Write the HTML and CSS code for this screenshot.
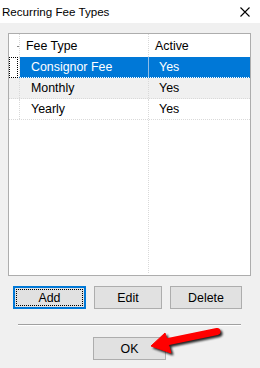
FILE: index.html
```
<!DOCTYPE html>
<html>
<head>
<meta charset="utf-8">
<link rel="stylesheet" href="styles.css">
</head>
<body>
<div class="window">
  <div class="titlebar">
    <span class="title">Recurring Fee Types</span>
    <svg class="close" width="10" height="10" viewBox="0 0 10 10"><path d="M0.5 0.5 L9.5 9.5 M9.5 0.5 L0.5 9.5" stroke="#000" stroke-width="1.1" fill="none"/></svg>
  </div>
  <div class="content">
    <div class="list">
      <div class="row header">
        <div class="rh"><span class="mark"></span></div>
        <div class="c1">Fee Type</div>
        <div class="c2">Active</div>
      </div>
      <div class="row data selected">
        <div class="rh"><span class="focus"></span></div>
        <div class="c1">Consignor Fee</div>
        <div class="c2">Yes</div>
      </div>
      <div class="row data alt">
        <div class="rh"></div>
        <div class="c1">Monthly</div>
        <div class="c2">Yes</div>
      </div>
      <div class="row data">
        <div class="rh"></div>
        <div class="c1">Yearly</div>
        <div class="c2">Yes</div>
      </div>
      <div class="filler"><div class="fill-left"></div></div>
    </div>
    <div class="buttons">
      <button class="btn default"><span class="focus-text">Add</span></button>
      <button class="btn edit">Edit</button>
      <button class="btn del">Delete</button>
    </div>
    <div class="separator"></div>
    <div class="ok-row">
      <button class="btn ok">OK</button>
    </div>
  </div>
  <svg class="arrow" width="260" height="368" viewBox="0 0 260 368">
    <defs>
      <filter id="sh" x="-20%" y="-40%" width="150%" height="200%">
        <feGaussianBlur stdDeviation="1.2"/>
      </filter>
    </defs>
    <g transform="translate(2,2)" filter="url(#sh)" fill="#000" stroke="#000" opacity="0.85">
      <line x1="166" y1="342" x2="217" y2="331.5" stroke-width="7" stroke-linecap="round"/>
      <polygon points="151,346 165,333 171,353" stroke-width="1" stroke-linejoin="round"/>
    </g>
    <g fill="#f00" stroke="#f00">
      <line x1="166" y1="342" x2="217" y2="331.5" stroke-width="7" stroke-linecap="round"/>
      <polygon points="151,346 165,333 171,353" stroke-width="1" stroke-linejoin="round"/>
    </g>
  </svg>
</div>
</body>
</html>
```
FILE: styles.css
```
* { box-sizing: border-box; }
html, body { margin: 0; padding: 0; }
body {
  background: #f0f0f0;
  font-family: "Liberation Sans", Arial, sans-serif;
  color: #000;
}
.window {
  position: relative;
  width: 260px;
  height: 368px;
  background: #f0f0f0;
  overflow: hidden;
}
.titlebar {
  height: 23px;
  background: #fff;
  display: flex;
  align-items: center;
  justify-content: space-between;
  padding: 0 10px 0 2px;
}
.title {
  font-size: 11.6px;
  margin-top: -1px;
}
.close { display: block; margin-top: 1px; }
.content {
  padding: 10px 0 0 8px;
}
.list {
  width: 243px;
  height: 243px;
  border: 1px solid #adadad;
  background: #fff;
  display: flex;
  flex-direction: column;
  font-size: 12.4px;
}
.row {
  display: flex;
  height: 21px;
  border-bottom: 1px dotted #d9d9d9;
}
.row.header {
  height: 23px;
  border-bottom: none;
}
.rh {
  width: 11px;
  border-right: 1px dotted #d9d9d9;
  position: relative;
  flex: none;
}
.c1 {
  width: 129px;
  border-right: 1px dotted #d9d9d9;
  flex: none;
  display: flex;
  align-items: center;
  padding-left: 11px;
}
.c2 {
  flex: 1;
  display: flex;
  align-items: center;
  padding-left: 10px;
}
.header .c1 { padding-left: 6px; }
.header .c2 { padding-left: 6px; }
.mark {
  position: absolute;
  left: 8px;
  top: 12px;
  width: 2px;
  height: 1px;
  background: #888;
}
.selected .c1, .selected .c2 {
  background: #0078d7;
  color: #fff;
}
.selected .c1 { border-right: 1px solid #8fbde8; }
.selected { border-bottom-color: #0078d7; }
.focus {
  position: absolute;
  left: 0px;
  top: 0px;
  width: 9px;
  height: 21px;
  border: 1px dotted #000;
}
.alt { background: #f0f0f0; }
.filler {
  flex: 1;
  display: flex;
}
.fill-left {
  width: 140px;
  border-right: 1px dotted #d9d9d9;
  margin-bottom: 2px;
}
.buttons {
  display: flex;
  gap: 8px;
  padding-left: 5px;
  margin-top: 10px;
}
.btn {
  height: 23px;
  background: #e1e1e1;
  border: 1px solid #adadad;
  font-family: "Liberation Sans", Arial, sans-serif;
  font-size: 12.4px;
  color: #000;
  padding: 0;
  margin: 0;
  display: flex;
  align-items: center;
  justify-content: center;
}
.btn.default {
  width: 73px;
  border: 2px solid #0078d7;
  position: relative;
}
.btn.default::after {
  content: "";
  position: absolute;
  left: 1px;
  top: 1px;
  right: 1px;
  bottom: 1px;
  border: 1px dotted #000;
}
.btn.edit { width: 68px; }
.btn.del { width: 72px; }
.separator {
  margin: 15px 0 0 10px;
  width: 223px;
  height: 1px;
  background: #a0a0a0;
  box-shadow: 0 1px 0 #fff;
}
.ok-row {
  padding-left: 85px;
  margin-top: 12px;
}
.btn.ok { width: 73px; }
.arrow {
  position: absolute;
  left: 0;
  top: 0;
  pointer-events: none;
}
```
